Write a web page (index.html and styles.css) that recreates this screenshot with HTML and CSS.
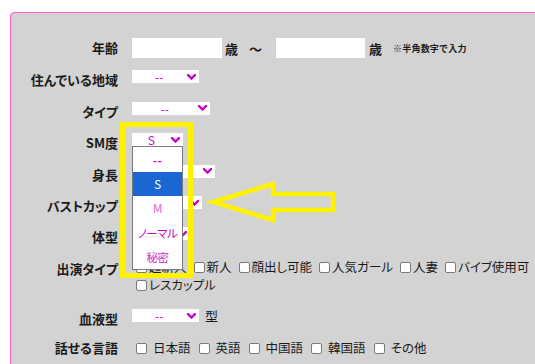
FILE: index.html
```html
<!DOCTYPE html>
<html lang="ja">
<head>
<meta charset="utf-8">
<title>検索フォーム</title>
<link rel="stylesheet" href="styles.css">
</head>
<body>
<div class="panel">
  <div class="form">
    <div class="lbl lbl-plain">年齢</div>
    <div class="val">
      <input class="age" type="text"><span class="unit">歳</span><span class="tilde">〜</span><input class="age age2" type="text"><span class="unit unit2">歳</span><span class="note">※半角数字で入力</span>
    </div>

    <div class="lbl">住んでいる地域</div>
    <div class="val"><div class="sel w67"><span class="sv">--</span><svg class="chev" viewBox="0 0 9 6"><path d="M1 1 L4.5 4.5 L8 1"/></svg></div></div>

    <div class="lbl">タイプ</div>
    <div class="val"><div class="sel w78"><span class="sv">--</span><svg class="chev" viewBox="0 0 9 6"><path d="M1 1 L4.5 4.5 L8 1"/></svg></div></div>

    <div class="lbl">SM度</div>
    <div class="val">
      <div class="sel w51 open"><span class="sv">S</span><svg class="chev" viewBox="0 0 9 6"><path d="M1 1 L4.5 4.5 L8 1"/></svg>
        <ul class="list">
          <li class="opt opt-dash">--</li>
          <li class="opt opt-sel">S</li>
          <li class="opt opt-m">M</li>
          <li class="opt">ノーマル</li>
          <li class="opt opt-h">秘密</li>
        </ul>
      </div>
    </div>

    <div class="lbl">身長</div>
    <div class="val"><div class="sel w83"><span class="sv">--</span><svg class="chev" viewBox="0 0 9 6"><path d="M1 1 L4.5 4.5 L8 1"/></svg></div></div>

    <div class="lbl">バストカップ</div>
    <div class="val"><div class="sel w70"><span class="sv">--</span><svg class="chev" viewBox="0 0 9 6"><path d="M1 1 L4.5 4.5 L8 1"/></svg></div></div>

    <div class="lbl">体型</div>
    <div class="val"><div class="sel w58"><span class="sv">--</span><svg class="chev" viewBox="0 0 9 6"><path d="M1 1 L4.5 4.5 L8 1"/></svg></div></div>

    <div class="lbl lbl-multi">出演タイプ</div>
    <div class="val val-multi">
      <div class="cbs">
        <label class="cb"><input type="checkbox"><span>超新人</span></label>
        <label class="cb"><input type="checkbox"><span>新人</span></label>
        <label class="cb"><input type="checkbox"><span>顔出し可能</span></label>
        <label class="cb"><input type="checkbox"><span>人気ガール</span></label>
        <label class="cb"><input type="checkbox"><span>人妻</span></label>
        <label class="cb"><input type="checkbox"><span>バイブ使用可</span></label>
        <span class="break"></span>
        <label class="cb"><input type="checkbox"><span>レスカップル</span></label>
      </div>
    </div>

    <div class="lbl">血液型</div>
    <div class="val"><div class="sel w67"><span class="sv">--</span><svg class="chev" viewBox="0 0 9 6"><path d="M1 1 L4.5 4.5 L8 1"/></svg></div><span class="suffix">型</span></div>

    <div class="lbl lbl-plain">話せる言語</div>
    <div class="val">
      <div class="cbs cbs-wide">
        <label class="cb"><input type="checkbox"><span>日本語</span></label>
        <label class="cb"><input type="checkbox"><span>英語</span></label>
        <label class="cb"><input type="checkbox"><span>中国語</span></label>
        <label class="cb"><input type="checkbox"><span>韓国語</span></label>
        <label class="cb"><input type="checkbox"><span>その他</span></label>
      </div>
    </div>
  </div>
</div>

<svg class="annot" viewBox="0 0 535 364" width="535" height="364">
  <rect x="122.5" y="124.5" width="68" height="151" fill="none" stroke="#fff200" stroke-width="5"/>
  <polygon points="213,202 273,184 273,194 333,194 333,210 273,210 273,220" fill="none" stroke="#fff200" stroke-width="4.5" stroke-linejoin="miter"/>
</svg>
</body>
</html>
```

FILE: styles.css
```css
html, body {
  margin: 0;
  padding: 0;
  background: #ffffff;
  overflow: hidden;
}

body {
  width: 535px;
  height: 364px;
  position: relative;
  font-family: "Noto Sans CJK JP", sans-serif;
  color: #1a1a1a;
}

.panel {
  margin: 12px 0 0 10px;
  width: 600px;
  height: 420px;
  box-sizing: border-box;
  background: #d3d3d3;
  border: 1.5px solid #ff5ccf;
  border-radius: 4px 4px 0 0;
  padding-top: 22px;
}

.form {
  display: grid;
  grid-template-columns: 107px 1fr;
  column-gap: 14px;
  grid-template-rows: 26px 31px 32px 31px 32px 31px 31px 51px 31px 34px;
}

.lbl {
  font-size: 13px;
  font-weight: 700;
  font-feature-settings: "palt";
  text-align: right;
  line-height: 18px;
  align-self: center;
  padding-top: 7px;
  white-space: nowrap;
}

.lbl-plain {
  padding-top: 0;
}

.lbl-multi {
  align-self: start;
  padding-top: 11px;
}

.val {
  display: flex;
  align-items: center;
}

.val-multi {
  align-items: flex-start;
  padding-top: 9px;
}

.age {
  width: 90px;
  height: 20px;
  border: 0;
  padding: 0;
  margin: 0;
  background: #ffffff;
  box-sizing: border-box;
}

.age2 {
  width: 89px;
}

.unit {
  font-size: 13px;
  font-weight: 700;
  margin-left: 3px;
}

.unit2 {
  margin-left: 4px;
}

.tilde {
  font-size: 13px;
  font-weight: 700;
  margin-left: 11px;
  margin-right: 14px;
}

.note {
  font-size: 9px;
  font-weight: 700;
  margin-left: 11px;
  letter-spacing: 0.2px;
}

.sel {
  position: relative;
  display: inline-flex;
  align-items: center;
  height: 13px;
  background: #ffffff;
  box-sizing: border-box;
}

.w51 { width: 51px; }
.w58 { width: 58px; }
.w67 { width: 67px; }
.w70 { width: 70px; }
.w78 { width: 78px; }
.w83 { width: 83px; }

.sv {
  flex: 1;
  text-align: center;
  font-size: 12px;
  line-height: 13px;
  color: #cc00cc;
}

.chev {
  width: 9px;
  height: 6px;
  margin-right: 3.5px;
  flex: none;
}

.chev path {
  fill: none;
  stroke: #cc00cc;
  stroke-width: 2.4;
  stroke-linecap: square;
}

.suffix {
  font-size: 13px;
  margin-left: 6px;
}

.list {
  position: absolute;
  top: 13px;
  left: 0;
  width: 51px;
  box-sizing: border-box;
  margin: 0;
  padding: 1px 0 0;
  list-style: none;
  background: #ffffff;
  border: 1px solid #7a7a7a;
  z-index: 5;
}

.opt {
  height: 24.2px;
  line-height: 24px;
  text-align: center;
  font-size: 11.5px;
  letter-spacing: -0.5px;
  font-feature-settings: "palt";
  color: #cc00cc;
  white-space: nowrap;
}

.opt-dash {
  font-weight: 700;
  letter-spacing: 0.5px;
}

.opt-sel {
  background: #1a66d2;
  color: #ffffff;
}

.opt-m {
  color: #dd66dd;
}

.opt-h {
  color: #cc33cc;
}

.cbs {
  display: flex;
  flex-wrap: wrap;
  column-gap: 7px;
  padding-left: 4px;
  line-height: 18px;
  width: 420px;
}

.cbs-wide {
  column-gap: 8px;
}

.cbs-wide .cb {
  gap: 6px;
}

.break {
  flex-basis: 100%;
  height: 0;
}

.cb {
  display: inline-flex;
  align-items: center;
  gap: 2px;
  font-size: 12.5px;
  font-feature-settings: "palt";
  color: #1a1a1a;
  white-space: nowrap;
}

.cb input {
  appearance: none;
  -webkit-appearance: none;
  width: 11px;
  height: 11px;
  margin: 0;
  border: 1px solid #7a7a7a;
  border-radius: 2px;
  background: #ffffff;
  box-sizing: border-box;
  flex: none;
}

.annot {
  position: absolute;
  top: 0;
  left: 0;
  pointer-events: none;
  z-index: 10;
}
```
